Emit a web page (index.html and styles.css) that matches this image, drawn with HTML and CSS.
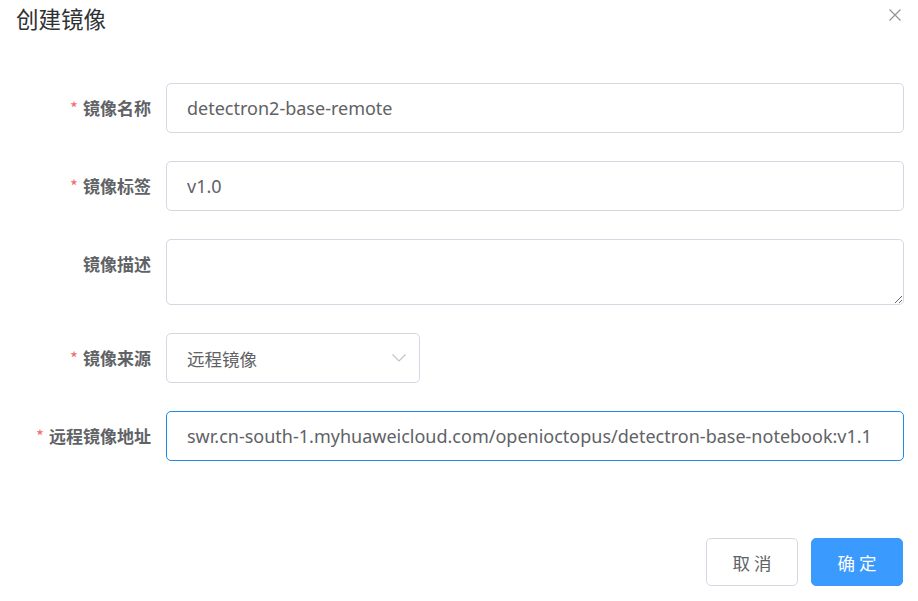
FILE: index.html
```html
<!DOCTYPE html>
<html lang="zh-CN">
<head>
<meta charset="utf-8">
<title>创建镜像</title>
<link rel="stylesheet" href="styles.css">
</head>
<body>
<div class="dialog">
  <header class="dialog-header">
    <span class="dialog-title">创建镜像</span>
    <button class="dialog-close" type="button" aria-label="关闭">
      <svg width="12" height="12" viewBox="0 0 12 12"><path d="M0.5 0.5 L11.5 11.5 M11.5 0.5 L0.5 11.5" stroke="#909399" stroke-width="1.2" fill="none"/></svg>
    </button>
  </header>
  <form class="form">
    <div class="form-item">
      <label class="form-label required">镜像名称</label>
      <div class="form-control"><input class="input" type="text" value="detectron2-base-remote"></div>
    </div>
    <div class="form-item">
      <label class="form-label required">镜像标签</label>
      <div class="form-control"><input class="input" type="text" value="v1.0"></div>
    </div>
    <div class="form-item">
      <label class="form-label">镜像描述</label>
      <div class="form-control"><textarea class="textarea"></textarea></div>
    </div>
    <div class="form-item">
      <label class="form-label required">镜像来源</label>
      <div class="form-control">
        <div class="select">
          <span class="select-value">远程镜像</span>
          <svg class="select-arrow" width="14" height="8" viewBox="0 0 14 8"><path d="M0.5 0.5 L7 7 L13.5 0.5" stroke="#c0c4cc" stroke-width="1.2" fill="none"/></svg>
        </div>
      </div>
    </div>
    <div class="form-item">
      <label class="form-label required">远程镜像地址</label>
      <div class="form-control"><input class="input focused" type="text" value="swr.cn-south-1.myhuaweicloud.com/openioctopus/detectron-base-notebook:v1.1"></div>
    </div>
  </form>
  <footer class="dialog-footer">
    <button class="btn" type="button">取 消</button>
    <button class="btn btn-primary" type="button">确 定</button>
  </footer>
</div>
</body>
</html>
```
FILE: styles.css
```css
html, body {
  margin: 0;
  padding: 0;
  background: #ffffff;
}
body {
  font-family: "Noto Sans", "Noto Sans CJK SC", sans-serif;
  color: #606266;
}
.dialog {
  width: 918px;
  height: 601px;
  box-sizing: border-box;
  padding: 0 14px 0 16px;
  display: flex;
  flex-direction: column;
}
.dialog-header {
  height: 40px;
  display: flex;
  align-items: center;
  justify-content: space-between;
}
.dialog-title {
  font-size: 22.5px;
  color: #303133;
  line-height: 40px;
}
.dialog-close {
  border: 0;
  background: none;
  padding: 0;
  margin: 0 3px 0 0;
  width: 12px;
  height: 12px;
  display: flex;
  align-self: flex-start;
  margin-top: 9px;
  cursor: pointer;
}
.form {
  margin-top: 43px;
  display: flex;
  flex-direction: column;
  gap: 28px;
}
.form-item {
  display: flex;
  align-items: flex-start;
}
.form-label {
  width: 150px;
  flex: none;
  box-sizing: border-box;
  padding-right: 15px;
  text-align: right;
  font-family: "Noto Sans CJK SC", sans-serif;
  font-size: 17px;
  font-weight: 700;
  line-height: 50px;
  color: #606266;
}
.form-label.required::before {
  content: "*";
  color: #f56c6c;
  margin-right: 5px;
  font-weight: 400;
}
.form-control {
  flex: 1;
  display: flex;
}
.input,
.textarea,
.select {
  box-sizing: border-box;
  border: 1px solid #d3d8e1;
  border-radius: 5px;
  background: #fff;
  font-family: "Noto Sans", "Noto Sans CJK SC", sans-serif;
  font-size: 18px;
  color: #606266;
  outline: none;
}
.input {
  width: 100%;
  height: 50px;
  padding: 0 20px;
}
.input.focused {
  border-color: #1c8ae6;
}
.textarea {
  width: 100%;
  height: 66px;
  padding: 8px 20px;
  resize: vertical;
  display: block;
}
.select {
  width: 254px;
  height: 50px;
  padding: 0 13px 0 20px;
  display: flex;
  align-items: center;
  justify-content: space-between;
  font-family: "Noto Sans CJK SC", sans-serif;
  font-size: 17.5px;
}
.select-arrow {
  flex: none;
}
.dialog-footer {
  margin-top: 77px;
  display: flex;
  justify-content: flex-end;
  gap: 13px;
  padding-right: 1px;
}
.btn {
  width: 92px;
  height: 48px;
  box-sizing: border-box;
  border: 1px solid #d3d8e1;
  border-radius: 5px;
  background: #fff;
  color: #606266;
  font-family: "Noto Sans CJK SC", sans-serif;
  font-size: 17.5px;
  cursor: pointer;
  padding: 0;
}
.btn-primary {
  background: #3a9afd;
  border-color: #3a9afd;
  color: #fff;
}
```
